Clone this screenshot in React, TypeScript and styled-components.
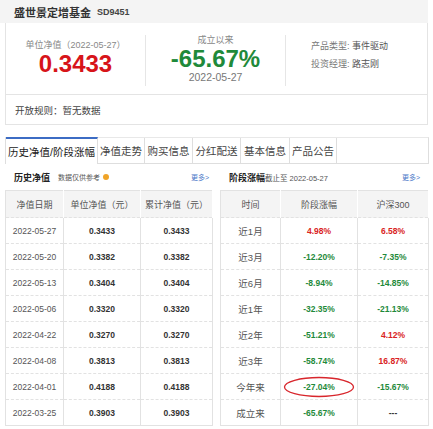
import React from "react";
import styled, { createGlobalStyle } from "styled-components";

const GlobalStyle = createGlobalStyle`
  html, body {
    margin: 0;
    padding: 0;
    background: #fff;
  }
  body {
    font-family: "Liberation Sans", "Noto Sans CJK SC", sans-serif;
    color: #333;
  }
`;

const RED = "#d7141a";
const GREEN = "#1f8a3b";

type Row = { date: string; unit: string; total: string };
type Perf = { period: string; fund: string; index: string };

const navRows: Row[] = [
  { date: "2022-05-27", unit: "0.3433", total: "0.3433" },
  { date: "2022-05-20", unit: "0.3382", total: "0.3382" },
  { date: "2022-05-13", unit: "0.3404", total: "0.3404" },
  { date: "2022-05-06", unit: "0.3320", total: "0.3320" },
  { date: "2022-04-22", unit: "0.3270", total: "0.3270" },
  { date: "2022-04-08", unit: "0.3813", total: "0.3813" },
  { date: "2022-04-01", unit: "0.4188", total: "0.4188" },
  { date: "2022-03-25", unit: "0.3903", total: "0.3903" },
];

const perfRows: Perf[] = [
  { period: "近1月", fund: "4.98%", index: "6.58%" },
  { period: "近3月", fund: "-12.20%", index: "-7.35%" },
  { period: "近6月", fund: "-8.94%", index: "-14.85%" },
  { period: "近1年", fund: "-32.35%", index: "-21.13%" },
  { period: "近2年", fund: "-51.21%", index: "4.12%" },
  { period: "近3年", fund: "-58.74%", index: "16.87%" },
  { period: "今年来", fund: "-27.04%", index: "-15.67%" },
  { period: "成立来", fund: "-65.67%", index: "---" },
];

const tabs = ["历史净值/阶段涨幅", "净值走势", "购买信息", "分红配送", "基本信息", "产品公告"];
const tabWidths = [92, 47, 48, 48, 49, 47];

const Page = styled.div`
  width: 433px;
  height: 429px;
  overflow: hidden;
`;

const TitleBar = styled.div`
  width: 428px;
  height: 23px;
  background: #f4f4f4;
  display: flex;
  align-items: center;
  padding-left: 14px;
  box-sizing: border-box;
  gap: 6px;
`;

const FundName = styled.span`
  font-size: 11px;
  font-weight: bold;
  color: #333;
`;

const FundCode = styled.span`
  font-size: 9px;
  font-weight: bold;
  color: #444;
`;

const InfoBox = styled.div`
  margin-left: 5px;
  width: 423px;
  box-sizing: border-box;
  border: 1px solid #e4e4e4;
  border-top: none;
`;

const Summary = styled.div`
  height: 72px;
  box-sizing: border-box;
  padding-top: 12px;
  display: flex;
  align-items: flex-start;
  border-bottom: 1px solid #e4e4e4;
`;

const Stat = styled.div<{ $padTop: number }>`
  width: 140px;
  height: 51px;
  box-sizing: border-box;
  padding-top: ${(p) => p.$padTop}px;
  display: flex;
  flex-direction: column;
  align-items: center;
  border-right: 1px solid #e6e6e6;
`;

const StatLabel = styled.div`
  font-size: 9px;
  color: #888;
  line-height: 11px;
`;

const BigValue = styled.div<{ $color: string }>`
  font-size: 24px;
  font-weight: bold;
  color: ${(p) => p.$color};
  line-height: 25px;
`;

const StatDate = styled.div`
  font-size: 10.5px;
  color: #777;
  line-height: 13px;
`;

const Meta = styled.div`
  flex: 1;
  padding: 6px 0 0 25px;
  display: flex;
  flex-direction: column;
  gap: 7px;
`;

const MetaLine = styled.div`
  font-size: 9px;
  color: #777;
  line-height: 11px;
  span {
    color: #555;
  }
`;

const RuleLine = styled.div`
  height: 29px;
  display: flex;
  align-items: center;
  padding-left: 9px;
  font-size: 9.5px;
  color: #444;
`;

const TabBar = styled.div`
  margin: 12px 0 0 5px;
  width: 424px;
  height: 27px;
  box-sizing: border-box;
  border: 1px solid #dedede;
  border-top-color: #e8e8e8;
  display: flex;
`;

const Tab = styled.div<{ $active?: boolean }>`
  box-sizing: border-box;
  height: ${(p) => (p.$active ? "27px" : "25px")};
  margin-top: ${(p) => (p.$active ? "-1px" : "0")};
  display: flex;
  align-items: center;
  justify-content: center;
  border-right: 1px solid #dedede;
  border-top: ${(p) => (p.$active ? "2px solid #3c6cc4" : "none")};
  background: #fff;
  font-size: 10.5px;
  color: ${(p) => (p.$active ? "#222" : "#444")};
  white-space: nowrap;
`;

const Columns = styled.div`
  margin-left: 5px;
  width: 424px;
  display: flex;
  gap: 7px;
`;

const Column = styled.div<{ $width: number }>`
  width: ${(p) => p.$width}px;
`;

const SectionHead = styled.div<{ $padRight: number }>`
  height: 26px;
  display: flex;
  align-items: center;
  padding: 0 ${(p) => p.$padRight}px 0 9px;
`;

const HeadTitle = styled.span`
  font-size: 9px;
  font-weight: bold;
  color: #222;
`;

const HeadNote = styled.span`
  font-size: 7px;
  color: #555;
  margin-left: 8px;
  display: flex;
  align-items: center;
  gap: 3px;
`;

const HeadDate = styled.span`
  font-size: 7.5px;
  color: #555;
`;

const Dot = styled.span`
  width: 6px;
  height: 6px;
  border-radius: 50%;
  background: #f0a428;
  display: inline-block;
`;

const More = styled.span`
  margin-left: auto;
  font-size: 7px;
  color: #4a78c8;
`;

const Table = styled.table`
  width: 100%;
  border-collapse: collapse;
  table-layout: fixed;
  border: 1px solid #e2e2e2;
`;

const HeadCell = styled.th<{ $width?: number }>`
  width: ${(p) => (p.$width ? `${p.$width}px` : "auto")};
  height: 26px;
  background: #f4f4f4;
  font-size: 9px;
  font-weight: normal;
  color: #555;
  text-align: center;
  border-right: 1px solid #fff;
  padding: 0;
`;

const BodyRow = styled.tr`
  height: 26px;
  border-top: 1px dashed #e2e2e2;
`;

const Cell = styled.td<{ $bold?: boolean; $color?: string; $size?: number }>`
  text-align: center;
  padding: 0;
  border-right: 1px solid #e2e2e2;
  font-size: ${(p) => p.$size ?? 8.5}px;
  font-weight: ${(p) => (p.$bold ? "bold" : "normal")};
  color: ${(p) => p.$color ?? "#555"};
  position: relative;
`;

const Mark = styled.svg`
  position: absolute;
  left: 2px;
  top: 2px;
  pointer-events: none;
`;

const pctColor = (v: string) => (v.startsWith("-") ? (v === "---" ? "#333" : GREEN) : "#d92323");

export default function App() {
  return (
    <Page>
      <GlobalStyle />
      <TitleBar>
        <FundName>盛世景定增基金</FundName>
        <FundCode>SD9451</FundCode>
      </TitleBar>
      <InfoBox>
        <Summary>
          <Stat $padTop={5}>
            <StatLabel>单位净值（2022-05-27）</StatLabel>
            <BigValue $color={RED}>0.3433</BigValue>
          </Stat>
          <Stat $padTop={0}>
            <StatLabel>成立以来</StatLabel>
            <BigValue $color={GREEN}>-65.67%</BigValue>
            <StatDate>2022-05-27</StatDate>
          </Stat>
          <Meta>
            <MetaLine>
              产品类型: <span>事件驱动</span>
            </MetaLine>
            <MetaLine>
              投资经理: <span>路志刚</span>
            </MetaLine>
          </Meta>
        </Summary>
        <RuleLine>开放规则：暂无数据</RuleLine>
      </InfoBox>

      <TabBar>
        {tabs.map((t, i) => (
          <Tab key={t} $active={i === 0} style={{ width: tabWidths[i] }}>
            {t}
          </Tab>
        ))}
      </TabBar>

      <Columns>
        <Column $width={208}>
          <SectionHead $padRight={4}>
            <HeadTitle>历史净值</HeadTitle>
            <HeadNote>
              数据仅供参考 <Dot />
            </HeadNote>
            <More>更多&gt;</More>
          </SectionHead>
          <Table>
            <thead>
              <tr>
                <HeadCell $width={57}>净值日期</HeadCell>
                <HeadCell $width={76}>单位净值（元）</HeadCell>
                <HeadCell>累计净值（元）</HeadCell>
              </tr>
            </thead>
            <tbody>
              {navRows.map((r) => (
                <BodyRow key={r.date}>
                  <Cell>{r.date}</Cell>
                  <Cell $bold $color="#333">
                    {r.unit}
                  </Cell>
                  <Cell $bold $color="#333">
                    {r.total}
                  </Cell>
                </BodyRow>
              ))}
            </tbody>
          </Table>
        </Column>

        <Column $width={209}>
          <SectionHead $padRight={9}>
            <HeadTitle>阶段涨幅</HeadTitle>
            <HeadDate>截止至 2022-05-27</HeadDate>
            <More>更多&gt;</More>
          </SectionHead>
          <Table>
            <thead>
              <tr>
                <HeadCell $width={59}>时间</HeadCell>
                <HeadCell $width={76}>阶段涨幅</HeadCell>
                <HeadCell>沪深300</HeadCell>
              </tr>
            </thead>
            <tbody>
              {perfRows.map((r) => (
                <BodyRow key={r.period}>
                  <Cell $size={9.5}>{r.period}</Cell>
                  <Cell $bold $color={pctColor(r.fund)}>
                    {r.fund}
                    {r.period === "今年来" && (
                      <Mark width="72" height="22" viewBox="0 0 72 22">
                        <ellipse cx="36" cy="11" rx="34.5" ry="9.5" fill="none" stroke="#d8262c" strokeWidth="1.3" />
                      </Mark>
                    )}
                  </Cell>
                  <Cell $bold $color={pctColor(r.index)}>
                    {r.index}
                  </Cell>
                </BodyRow>
              ))}
            </tbody>
          </Table>
        </Column>
      </Columns>
    </Page>
  );
}
